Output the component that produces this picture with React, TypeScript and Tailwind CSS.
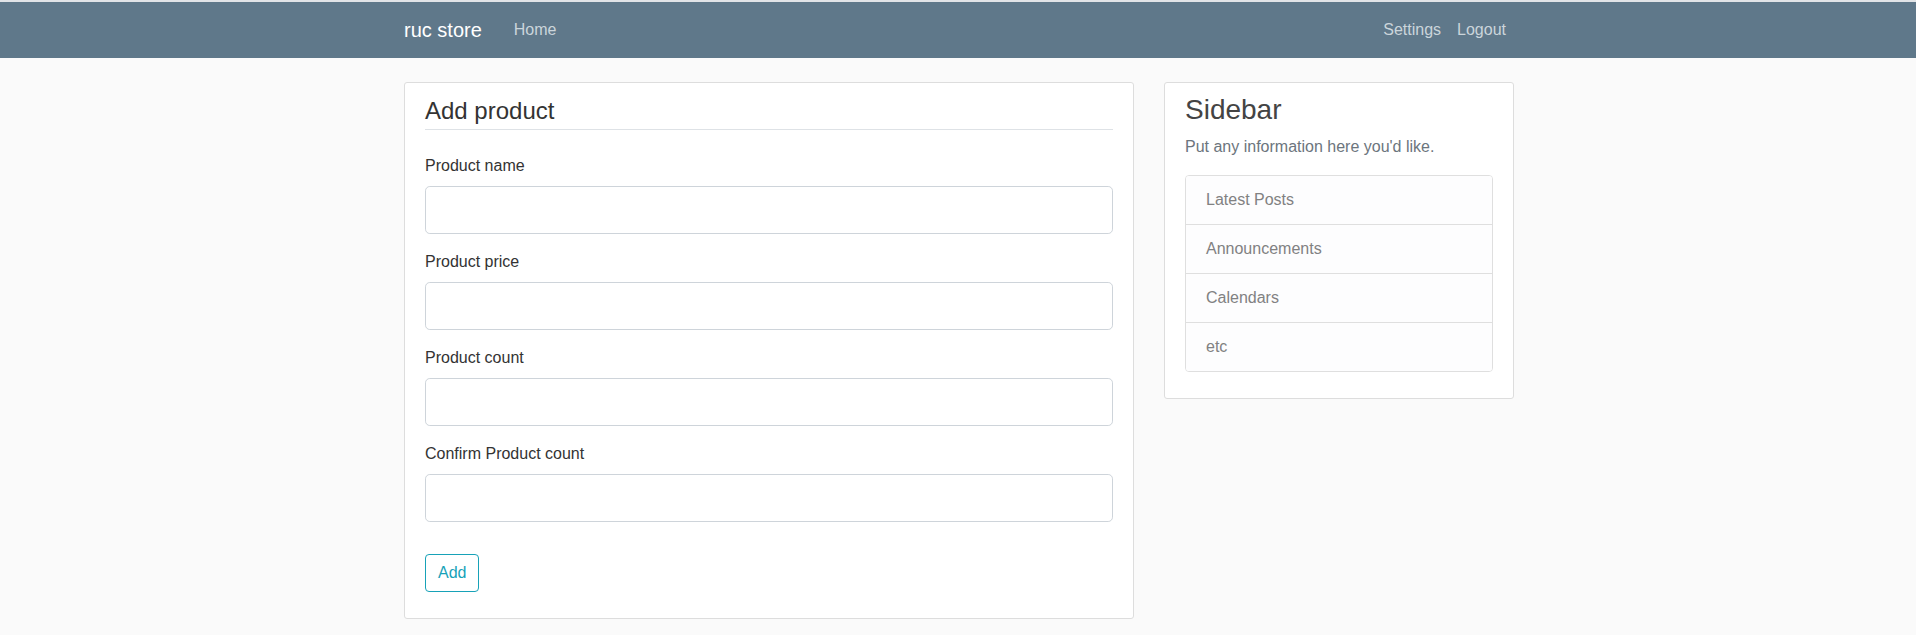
import React from "react";

const fields = ["Product name", "Product price", "Product count", "Confirm Product count"];
const items = ["Latest Posts", "Announcements", "Calendars", "etc"];

export default function App() {
  return (
    <div
      className="min-h-screen bg-[#fafafa] text-[#333333]"
      style={{ fontFamily: '"Liberation Sans", Arial, sans-serif' }}
    >
      <div className="h-[2px] bg-[#e1e4e7]" />
      <nav className="h-[56px] bg-[#5f788a]">
        <div className="mx-auto h-full w-[1142px] pl-[2px]">
          <div className="flex h-full items-center px-[15px]">
            <a className="mr-6 text-[20px] leading-[30px] text-white">ruc store</a>
            <a className="px-2 text-[16px] leading-6 text-[#cbd5db]">Home</a>
            <div className="ml-auto flex">
              <a className="px-2 text-[16px] leading-6 text-[#cbd5db]">Settings</a>
              <a className="px-2 text-[16px] leading-6 text-[#cbd5db]">Logout</a>
            </div>
          </div>
        </div>
      </nav>
      <div className="mx-auto mt-[24px] w-[1142px] pl-[2px]">
        <main className="flex items-start">
          <div className="w-[760px] px-[15px]">
            <div className="mb-5 rounded-[3px] border border-[#dddddd] bg-white px-5 py-[10px]">
              <form onSubmit={(e) => e.preventDefault()}>
                <fieldset className="mb-4">
                  <legend className="mb-6 block w-full border-b border-[#dee2e6] text-[24px] leading-[36px] text-[#333333]">
                    Add product
                  </legend>
                  {fields.map((f) => (
                    <div key={f} className="mb-4">
                      <label className="mb-2 block text-[16px] leading-6 text-[#333333]">{f}</label>
                      <input
                        type="text"
                        className="block h-12 w-full rounded-[4.8px] border border-[#ced4da] bg-white px-4 text-[20px] outline-none"
                      />
                    </div>
                  ))}
                </fieldset>
                <div className="mb-4">
                  <button
                    type="submit"
                    className="rounded-[4px] border border-[#17a2b8] px-3 py-[6px] text-[16px] leading-6 text-[#17a2b8]"
                  >
                    Add
                  </button>
                </div>
              </form>
            </div>
          </div>
          <div className="w-[380px] px-[15px]">
            <div className="mb-5 rounded-[3px] border border-[#dddddd] bg-white px-5 py-[10px]">
              <h3 className="mb-2 text-[28px] leading-[33.6px] text-[#444444]">Sidebar</h3>
              <p className="mb-4 text-[16px] leading-6 text-[#6c757d]">Put any information here you'd like.</p>
              <ul className="mb-4 overflow-hidden rounded-[4px] border border-[#dfdfdf]">
                {items.map((it, i) => (
                  <li
                    key={it}
                    className={
                      "bg-[#fdfdfe] px-5 py-3 text-[16px] leading-6 text-[#818182] " +
                      (i < items.length - 1 ? "border-b border-[#dfdfdf]" : "")
                    }
                  >
                    {it}
                  </li>
                ))}
              </ul>
            </div>
          </div>
        </main>
      </div>
    </div>
  );
}
